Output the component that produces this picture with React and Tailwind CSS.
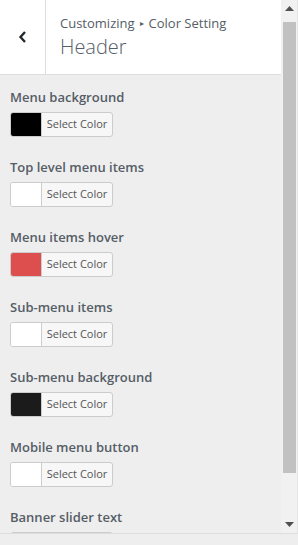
import React from "react";

const items = [
  { label: "Menu background", color: "#000000" },
  { label: "Top level menu items", color: "#ffffff" },
  { label: "Menu items hover", color: "#dd4f4f" },
  { label: "Sub-menu items", color: "#ffffff" },
  { label: "Sub-menu background", color: "#1b1b1b" },
  { label: "Mobile menu button", color: "#ffffff" },
  { label: "Banner slider text", color: "#ffffff" },
];

export default function App() {
  return (
    <div
      className="w-[298px] h-[545px] flex flex-col bg-[#eeeeee] overflow-hidden text-[#555d66]"
      style={{ fontFamily: '"Open Sans", "Noto Sans", sans-serif' }}
    >
      <div className="flex h-[533px]">
        <div className="w-[281px] flex flex-col overflow-hidden">
          <div className="h-[75px] shrink-0 bg-white border-b border-[#dddddd] flex">
            <div className="w-[46px] border-r border-[#dddddd] flex items-center justify-center">
              <svg width="10" height="14" viewBox="0 0 10 14">
                <path d="M7 2 L2.5 7 L7 12" fill="none" stroke="#23282d" strokeWidth="2.4" />
              </svg>
            </div>
            <div className="pl-[14px] pt-[13px] flex flex-col">
              <div className="text-[13px] leading-[20px] text-[#555d66] flex items-center">
                Customizing
                <span className="text-[8px] mx-[5px]">▸</span>
                Color Setting
              </div>
              <div className="text-[20px] leading-[28px] font-light text-[#555d66]">Header</div>
            </div>
          </div>
          <div className="px-[10px] pt-[12px] flex flex-col gap-[20px]">
            {items.map((it) => (
              <div key={it.label} className="flex flex-col gap-[5px]">
                <div className="text-[13px] leading-[20px] font-semibold text-[#555d66]">{it.label}</div>
                <div className="w-[103px] h-[25px] shrink-0 flex rounded-[3px] border border-[#cccccc] overflow-hidden bg-[#f7f7f7]">
                  <div className="w-[31px] h-full border-r border-[#cccccc]" style={{ background: it.color }} />
                  <div className="flex-1 flex items-center justify-center text-[11px] text-[#555555]">Select Color</div>
                </div>
              </div>
            ))}
          </div>
        </div>
        <div className="w-[17px] bg-[#f1f1f1] flex flex-col items-center border-r border-[#e4e4e4]">
          <div className="h-[17px] flex items-center justify-center">
            <svg width="9" height="5" viewBox="0 0 9 5"><path d="M0 5 L4.5 0 L9 5 Z" fill="#505050" /></svg>
          </div>
          <div className="w-[13px] mt-[5px] h-[451px] bg-[#c1c1c1]" />
          <div className="flex-1" />
          <div className="h-[17px] flex items-center justify-center">
            <svg width="9" height="5" viewBox="0 0 9 5"><path d="M0 0 L4.5 5 L9 0 Z" fill="#505050" /></svg>
          </div>
        </div>
      </div>
      <div className="flex-1 border-t border-[#dddddd] bg-[#eeeeee]" />
    </div>
  );
}
